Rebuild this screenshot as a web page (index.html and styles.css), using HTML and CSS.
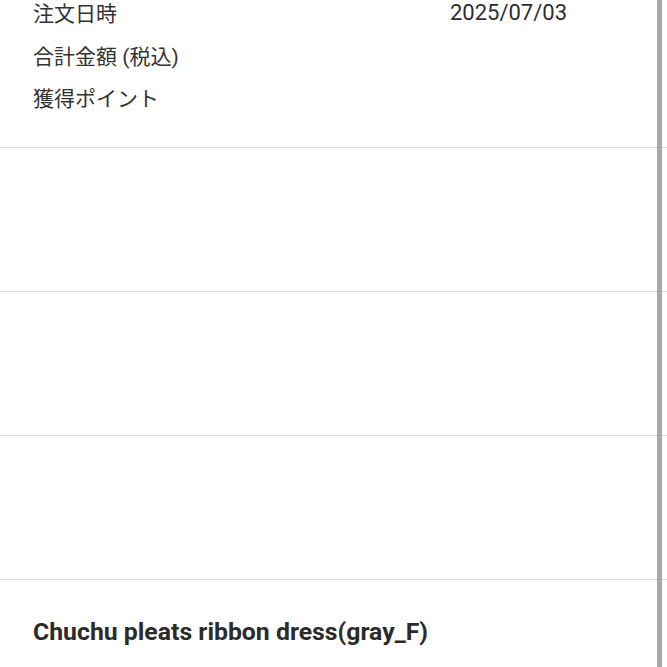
FILE: index.html
```html
<!DOCTYPE html>
<html lang="ja">
<head>
<meta charset="utf-8">
<title>注文詳細</title>
<link rel="stylesheet" href="styles.css">
</head>
<body>
<main class="page">
  <section class="summary">
    <div class="row"><span class="label">注文日時</span><span class="value">2025/07/03</span></div>
    <div class="row"><span class="label">合計金額 (税込)</span><span class="value"></span></div>
    <div class="row"><span class="label">獲得ポイント</span><span class="value"></span></div>
  </section>
  <section class="block"></section>
  <section class="block"></section>
  <section class="block"></section>
  <section class="item">
    <h2 class="item-name">Chuchu pleats ribbon dress(gray_F)</h2>
    <p class="item-meta">数量：1　単価：　　　　　　(税込)</p>
  </section>
</main>
<div class="scrollbar"></div>
</body>
</html>
```
FILE: styles.css
```css
html, body {
  margin: 0;
  padding: 0;
  background: #ffffff;
  height: 100%;
  overflow: hidden;
}

body {
  font-family: Roboto, "Noto Sans CJK JP", "Noto Sans", sans-serif;
  color: #333333;
  position: relative;
}

.page {
  width: 100%;
}

.summary {
  margin-top: -9px;
  padding: 0 100px 28px 33px;
  border-bottom: 1px solid #dcdcdc;
}

.row {
  height: 42.5px;
  display: flex;
  align-items: center;
  justify-content: space-between;
  font-size: 21px;
}

.value {
  font-size: 22px;
  color: #2e2e2e;
}

.block {
  height: 143px;
  border-bottom: 1px solid #dcdcdc;
}

.item {
  padding: 36px 33px 0;
}

.item-name {
  margin: 0;
  font-size: 24.8px;
  font-weight: 700;
  color: #2b2b2b;
  line-height: 32px;
}

.item-meta {
  margin: 16px 0 0;
  font-size: 19px;
  color: #444444;
}

/* scroll indicator on the right edge */
.scrollbar {
  position: absolute;
  top: 0;
  right: 5px;
  width: 5px;
  height: 100%;
  background: #a9a9a9;
}
```
